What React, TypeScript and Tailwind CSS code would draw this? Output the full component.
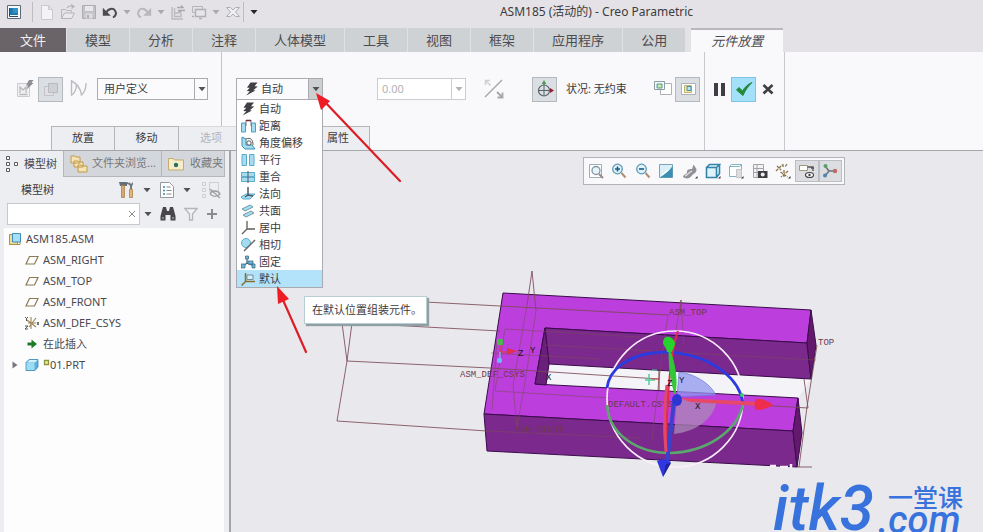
import React, { useState } from 'react'

type IconProps = { className?: string }

const Caret: React.FC<IconProps> = ({ className = 'text-neutral-600' }) => (
  <svg viewBox="0 0 8 6" className={`w-2 h-1.5 shrink-0 ${className}`}><path d="M.5 1h7L4 5.2z" fill="currentColor" /></svg>
)

const Bolt = () => (
  <svg viewBox="0 0 14 14" className="w-3.5 h-3.5 shrink-0">
    <path d="M5.500.5h7L9.500 4.300l3.200.1L8.300 8.300l2.200.2L1.200 13.600l3.600-4.300-3-.2L4.800 5.700H2z" fill="#3f3f44" />
  </svg>
)

// ---- quick access bar ----

const quick: { id: string; dim?: boolean; caret?: boolean; art: React.ReactNode }[] = [
  { id: '新建', art: <path d="M2.500 1.500h7l4 4v10h-11zM9.500 1.500v4h4" fill="#f3f2f4" stroke="#cbcace" /> },
  { id: '打开', art: <><path d="M1.500 14.500V5.500h4l1 1h5v2" fill="none" stroke="#b9b8bc" /><path d="M1.500 14.500l3-5.500h10l-3 5.500z" fill="#e9e8ea" stroke="#b5b4b8" /><path d="M7 4c1-2 3-2.500 6-1.500M11 .5l3 2-2.500 2" fill="none" stroke="#b5b4b8" strokeWidth="1.200" /></> },
  { id: '保存', art: <><path d="M1.500 1.500h13v13h-13z" fill="#c3c2c6" stroke="#aeadb1" /><path d="M4 2h8v5H4z" fill="#e8e7ea" /><path d="M4.500 9.500h7v5h-7z" fill="#dddce0" /><path d="M6 11h2v3H6z" fill="#aeadb1" /></> },
  { id: '撤消', caret: true, art: <><path d="M4 9C6 4.500 11 3.500 13 6.500s.5 5.500-2 7" fill="none" stroke="#4c4b50" strokeWidth="2" /><path d="M.8 3.800v8h8z" fill="#4c4b50" /></> },
  { id: '重做', caret: true, art: <><path d="M12 9C10 4.500 5 3.500 3 6.500s-.5 5.500 2 7" fill="none" stroke="#b9b8bc" strokeWidth="2" /><path d="M15.200 3.800v8h-8z" fill="#b9b8bc" /></> },
  { id: '重新生成', art: <><path d="M2 3v12h11M4.500 4v8.500H11V9M5 9h4V6" fill="none" stroke="#bab9bd" strokeWidth="1.400" /><path d="M7 3.500h6l-2-2M15 6.500H9l2 2" fill="none" stroke="#a9a8ac" strokeWidth="1.400" /></> },
  { id: '窗口', caret: true, art: <><path d="M1.500 2.500h10v6h-10z" fill="none" stroke="#b5b4b8" /><path d="M4.500 5.500h10v7h-10z" fill="#e6e5e8" stroke="#b0afb3" strokeWidth="1.400" /><path d="M1 12.500h2M8 14.500h3" stroke="#b0afb3" strokeWidth="1.400" /></> },
  { id: '关闭', art: <path d="M1.500 3.500h4L8 6l2.500-2.500h4L10.500 8l4 4.500h-4L8 10l-2.500 2.500h-4L5.500 8z" fill="#efeef0" stroke="#aeadb1" /> },
]

const TitleBar = () => (
  <header className="flex items-center h-7 bg-[#e4e2e6] pl-1.5 pb-1">
    <svg viewBox="0 0 16 16" className="w-4 h-4 shrink-0">
      <path d="M1.500 1.500h13v13h-13z" fill="#f7fafc" stroke="#5d6b77" />
      <path d="M4 4h8v7H4z" fill="#1f7bae" /><path d="M3.500 4v8.500H12" fill="none" stroke="#35495b" /><path d="M7 4h5v5H7z" fill="#2f93c4" />
    </svg>
    <span className="w-px h-5 bg-[#bdbcc0] ml-2.5 mr-1.5" />
    <div className="flex items-center gap-[5px]">
      {quick.map(q => (
        <React.Fragment key={q.id}>
          <button aria-label={q.id} className="w-4 h-4"><svg viewBox="0 0 16 16" className="w-4 h-4">{q.art}</svg></button>
          {q.caret && <Caret className="text-[#a9a8ac]" />}
        </React.Fragment>
      ))}
    </div>
    <span className="w-px h-5 bg-[#bdbcc0] ml-0.5 mr-1.5" />
    <button aria-label="自定义"><Caret className="text-neutral-800" /></button>
    <h1 className="flex-1 text-center text-[12px] text-[#3c3b40] pr-12 whitespace-nowrap">ASM185 (活动的) - Creo Parametric</h1>
  </header>
)

const tabs = ['模型', '分析', '注释', '人体模型', '工具', '视图', '框架', '应用程序', '公用']

const TabBar = () => (
  <nav className="flex h-6 bg-[#e4e2e6] text-[13px] leading-[22px] text-[#4c4b50] whitespace-nowrap">
    <button className="w-[66px] bg-[#6a6468] text-[#f1f0f2]">文件</button>
    {tabs.map(t => <button key={t} className="px-[18px] bg-[#cfd2d5] border-l border-[#e0e1e4]">{t}</button>)}
    <button className="ml-1.5 px-5 italic bg-[#f9f8fb] border-t-2 border-[#b9b8bc]">元件放置</button>
  </nav>
)

// ---- constraint list ----

const constraints: { name: string; art: React.ReactNode }[] = [
  { name: '自动', art: <path d="M6 .5h7L10 4.300l3.200.1L8.800 8.300l2.200.2L1.700 13.600l3.600-4.300-3-.2L5.300 5.700H2.500z" fill="#3f3f44" /> },
  { name: '距离', art: <><path d="M.5 4h4v9h-4zM10.500 4h4v9h-4z" fill="#a5dcf0" stroke="#4b9fc0" /><path d="M5 1v6M10 1v6" stroke="#777" /><path d="M5 1.500h5" stroke="#703040" strokeWidth="1.500" /></> },
  { name: '角度偏移', art: <><path d="M1 1v9l3 3h10l-3-4H5V3z" fill="#a5dcf0" stroke="#3f8fb3" /><path d="M5 3c5-2 7 1 7 6" fill="none" stroke="#555" /><circle cx="8" cy="7" r="2.200" fill="#fff" stroke="#555" /></> },
  { name: '平行', art: <path d="M1 1.500h4.500v11H1zM8.500 1.500H13v11H8.500z" fill="#a5dcf0" stroke="#5aaccb" /> },
  { name: '重合', art: <><path d="M.5 2.500h13v9H.5z" fill="#a5dcf0" stroke="#5aaccb" /><path d="M7 1v12" stroke="#555" /><path d="M1 7h12" stroke="#2c7fa5" /></> },
  { name: '法向', art: <><path d="M0 10l5-3h9l-5 5H2z" fill="#a5dcf0" stroke="#5aaccb" /><path d="M7 0v9M4 10l3-2 5 1" fill="none" stroke="#4b5966" strokeWidth="1.500" /></> },
  { name: '共面', art: <><path d="M1 5l8-4 3 2-8 4z" fill="#a5dcf0" stroke="#6d98aa" /><path d="M2 11l8-4 3 2-8 4z" fill="#a5dcf0" stroke="#6d98aa" /></> },
  { name: '居中', art: <path d="M6 0v8h8M6 8l-5 5" fill="none" stroke="#5f5e55" strokeWidth="1.300" /> },
  { name: '相切', art: <><circle cx="5" cy="5" r="4.500" fill="#a5dcf0" stroke="#5aaccb" /><path d="M14 2 3 13" stroke="#666" strokeWidth="1.500" /></> },
  { name: '固定', art: <><path d="M6 1v7l7 3M6 8l-5 4" fill="none" stroke="#3d6f8c" strokeWidth="1.300" /><path d="M4.500 1h3v3h-3zM7 6h5v3H7zM0 9h4v4H0zM11 9h3v4h-3z" fill="#6db7d4" stroke="#35627c" strokeWidth=".7" /></> },
  { name: '默认', art: <><path d="M6 3h6v4.500H6z" fill="#d9eef7" stroke="#6f8f9c" /><path d="M4.500 1v8.500H14M4.500 9.500.5 13.500" fill="none" stroke="#8a6d2a" strokeWidth="1.500" /></> },
]

const ConstraintPicker: React.FC = () => {
  const [active, setActive] = useState('默认')
  return (
    <div className="relative w-[87px] text-[11px]">
      <button aria-haspopup="listbox" aria-expanded="true" className="flex items-center w-full h-[22px] border border-[#a9abaf] bg-[#fbfafc]">
        <span className="flex-1 flex items-center gap-0.5 pl-2"><Bolt />自动</span>
        <span className="w-3.5 h-full flex items-center justify-center bg-[#cdd0d3] border-l border-[#a9abaf]"><Caret /></span>
      </button>
      <div className="absolute z-20 left-0 top-full w-full">
        <ul role="listbox" aria-label="约束类型" className="bg-white border border-t-0 border-[#a9abaf]">
          {constraints.map(c => (
            <li key={c.name} role="option" aria-selected={c.name === active} onMouseEnter={() => setActive(c.name)}
              className={`flex items-center gap-[3px] h-[17px] pl-1 leading-[17px] whitespace-nowrap ${c.name === active ? 'bg-[#b3e3fb]' : ''}`}>
              <svg viewBox="0 0 15 14" className="w-[15px] h-3.5 shrink-0">{c.art}</svg>{c.name}
            </li>
          ))}
        </ul>
        <div role="tooltip" className="absolute left-[68px] top-full mt-2 h-7 pl-[7px] pr-1 leading-[26px] text-[11px] whitespace-nowrap bg-white border border-[#b9cdd2] shadow-[2px_2px_1px_#8e9fa5]">
          在默认位置组装元件。
        </div>
      </div>
    </div>
  )
}

const pressed = 'w-[25px] h-[25px] shrink-0 flex items-center justify-center bg-[#dbdfe3] border border-[#b4b9be]'

const Ribbon = () => (
  <section className="flex h-[99px] bg-[#f9f8fb] border-b border-[#a6a7ab] text-[11px] text-[#3c3b40] whitespace-nowrap">
    <div className="flex flex-col">
      <div className="flex h-[74px]">
        <div className="flex items-center gap-1 pl-3.5 pr-[13px] border-r border-[#c3c2c7]">
          <button aria-label="手动" className="w-5 h-5">
            <svg viewBox="0 0 20 20" className="w-5 h-5"><path d="M3.500 4.500h12v13h-12z" fill="#f1f0f3" stroke="#cccbcf" /><path d="M6 14V8l3 3 3-3v6M5.500 15.500h8" fill="none" stroke="#bab9bd" strokeWidth="1.300" /><path d="M15 1h4.500l-2 3h2l-7 6.500 1.500-4h-2z" fill="#8f8e92" /></svg>
          </button>
          <button aria-label="界面" className={pressed}>
            <svg viewBox="0 0 18 18" className="w-4.5 h-4.5"><path d="M2.500 6.500h9v9h-9z" fill="#e0e1e4" stroke="#c1c3c7" /><path d="M6.500 3.500h9v9h-9z" fill="#cfd0d4" stroke="#b8babe" /></svg>
          </button>
          <button aria-label="转换" className="w-[22px] h-5">
            <svg viewBox="0 0 22 20" className="w-[22px] h-5"><path d="M4.500 1v15c3-1 5-6 5-11M4.500 2c6 3 9 7 10 14C18 13 19 9 19 4" fill="none" stroke="#bdbcc1" strokeWidth="1.400" /></svg>
          </button>
          <div className="relative ml-1">
            <select aria-label="约束集" className="appearance-none w-[111px] h-[22px] pl-1.5 bg-[#fbfafc] border border-[#a9abaf]"><option>用户定义</option></select>
            <span className="absolute right-0 top-0 h-full w-3.5 flex items-center justify-center border-l border-[#a9abaf] pointer-events-none"><Caret /></span>
          </div>
        </div>
        <div className="flex items-center pl-3.5 pr-1">
          <ConstraintPicker />
          <div className="flex ml-[54px] h-[22px] border border-[#cccbd0] bg-white">
            <input aria-label="偏移" disabled defaultValue="0.00" className="w-[73px] px-1 text-[#b3b2b7]" />
            <button aria-label="偏移列表" className="w-3.5 flex items-center justify-center border-l border-[#cccbd0]"><Caret className="text-[#b3b2b7]" /></button>
          </div>
          <button aria-label="反向" className="ml-4.5 w-5 h-5">
            <svg viewBox="0 0 20 20" className="w-5 h-5"><path d="M1 18 18 1" stroke="#a7a6aa" strokeWidth="1.400" /><path d="M1.500 6V1.500H6M1.500 1.500l5 5" fill="none" stroke="#d0cfd3" strokeWidth="1.500" /><path d="M18.500 13.500v5h-5M13 13l5 5" fill="none" stroke="#a7a6aa" strokeWidth="1.800" /></svg>
          </button>
          <button aria-label="3D 拖动器" className={`${pressed} ml-7`}>
            <svg viewBox="0 0 20 20" className="w-5 h-5"><circle cx="9" cy="11.500" r="5.500" fill="none" stroke="#55636c" strokeWidth="1.200" /><path d="M9 3v14M3 11.500h13" stroke="#55636c" /><path d="M6.800 5 9 1l2.200 4z" fill="#4c9a4c" /><path d="m15 9 4 2.500-4 2.500z" fill="#8c2434" /></svg>
          </button>
          <span className="ml-[9px] w-[62px]">状况: 无约束</span>
          <button aria-label="独立窗口" className="ml-6.5 w-[18px] h-[18px]">
            <svg viewBox="0 0 18 18" className="w-[18px] h-[18px]"><path d="M6.500 3.500h11v11h-11z" fill="#fff" stroke="#aeb0b4" /><path d="M.5 1.500h10v8H.5z" fill="#f5faf8" stroke="#8d9da0" /><path d="M3 4h5v4H3z" fill="#cfe8a8" stroke="#4a9c9c" /></svg>
          </button>
          <button aria-label="组件窗口" className={`${pressed} ml-[3px]`}>
            <svg viewBox="0 0 18 18" className="w-[18px] h-[18px]"><path d="M2.500 3.500h14v11h-14z" fill="#fff" stroke="#aeb0b4" /><path d="M5.500 5.500h7v7h-7z" fill="#f6e6a8" stroke="#c4b46a" /><path d="M8 6.500h4v4H8z" fill="#bfe4ee" stroke="#3d93ab" /></svg>
          </button>
        </div>
      </div>
      <div className="flex h-6 ml-[51px] self-start">
        <button className="w-16 bg-[#eceef2] border border-b-0 border-[#b4b6ba]">放置</button>
        <button className="w-16 bg-[#eceef2] border border-b-0 border-l-0 border-[#b4b6ba]">移动</button>
        <button disabled className="w-16 bg-[#eceef2] border-t border-[#d9dade] text-[#b5b4b9]">选项</button>
        <span className="w-16 bg-[#eceef2] border-t border-[#d9dade]" />
        <button className="w-[63px] bg-[#eceef2] border border-b-0 border-l-0 border-[#b4b6ba]">属性</button>
      </div>
    </div>
    <div className="flex gap-1.5 px-2 pb-6 w-[81px] items-center border-x border-[#c9c8cd]">
      <button aria-label="暂停" className="w-3 h-4 flex gap-[3px] justify-center"><i className="w-1 h-[13px] mt-0.5 bg-[#3f3e43]" /><i className="w-1 h-[13px] mt-0.5 bg-[#3f3e43]" /></button>
      <button aria-label="确定" className="w-[25px] h-[25px] bg-[#a3e0fb] border border-[#7fc4e4] flex items-center justify-center">
        <svg viewBox="0 0 20 20" className="w-5 h-5"><path d="M2.500 11 5 8.500 8.500 12C11 8 14 5 18 3.500 14 7.500 11 11.500 9 16.500z" fill="#238a3c" stroke="#238a3c" strokeWidth="1" /></svg>
      </button>
      <button aria-label="取消" className="w-3 h-3"><svg viewBox="0 0 12 12" className="w-3 h-3"><path d="m1.500 2 9 8.500M10.500 2l-9 8.500" stroke="#3f3e43" strokeWidth="2.600" /></svg></button>
    </div>
  </section>
)

// ---- model tree ----

const Plane = () => <svg viewBox="0 0 14 14" className="w-3.5 h-3.5"><path d="M4.500 3.500h8.500l-3.500 7.500H1z" fill="none" stroke="#8c7b52" strokeWidth="1.200" /></svg>

const tree: { name: string; art: React.ReactNode; open?: boolean }[] = [
  { name: 'ASM_RIGHT', art: <Plane /> },
  { name: 'ASM_TOP', art: <Plane /> },
  { name: 'ASM_FRONT', art: <Plane /> },
  { name: 'ASM_DEF_CSYS', art: <svg viewBox="0 0 14 14" className="w-3.5 h-3.5"><path d="M6 1v12M2 4l9 7M11 2 4 11M3 7h8" stroke="#9a8450" strokeWidth="1.100" /><path d="m0 1 1.500 1.500L3 1M1.500 2.500V5M0 10h3l-3 3h3M12 6l2 3M14 6l-2 3" fill="none" stroke="#444" strokeWidth=".9" /></svg> },
  { name: '在此插入', art: <svg viewBox="0 0 14 14" className="w-3.5 h-3.5"><path d="M2.500 5.500h4V2.500L12 7l-5.500 4.500v-3h-4z" fill="#1d7a2c" /></svg> },
  { name: '01.PRT', open: true, art: <svg viewBox="0 0 14 14" className="w-3.5 h-3.5"><path d="M1 4.500 4 1.500h9v7.500l-3 3.500H1z" fill="#58b2dc" stroke="#3a8cb4" strokeWidth=".8" /><path d="M1.500 5h8v7h-8z" fill="#9fdbf5" /><path d="M2 4.500 4.500 2H12.500L10 4.500z" fill="#d3f1fc" /></svg> },
]

const ModelTree = () => (
  <aside className="w-[231px] shrink-0 bg-[#eceef2] border-r-2 border-[#a3a5aa] text-[11px] text-[#4a494e] flex flex-col whitespace-nowrap">
    <div className="flex h-[26px] mr-1">
      <button className="w-[63px] flex items-center gap-1.5 pl-1.5">
        <svg viewBox="0 0 12 18" className="w-3 h-4.5"><path d="M.5 1.500h3v3h-3zM.5 7.500h3v3h-3zM.5 13.500h3v3h-3zM8.500 7.500h3v3h-3z" fill="#fff" stroke="#5b5a5f" /></svg>模型树
      </button>
      <button className="flex-1 flex items-center gap-1 pl-1.5 bg-[#d3d6da] border-l border-b border-[#b4b6ba] text-[#77767b]">
        <svg viewBox="0 0 18 18" className="w-4.5 h-4.5 shrink-0"><path d="M1 1h4l1 1h4v6H1zM4 6h4l1 1h4v5H4zM8 10h3l1 1h5v6H8z" fill="#f3e3b5" stroke="#c19a4c" /></svg>文件夹浏览...
      </button>
      <button className="w-16 flex items-center gap-1.5 pl-1.5 bg-[#d3d6da] border-l border-b border-r border-[#b4b6ba] text-[#77767b]">
        <svg viewBox="0 0 16 16" className="w-4 h-4"><path d="M.5 2.500h5l1 1.500h9v10H.5z" fill="#f6ecca" stroke="#c5ab6c" /><circle cx="8" cy="9" r="2.200" fill="#23715f" /></svg>收藏夹
      </button>
    </div>
    <div className="flex items-center h-[26px] pl-[21px] pr-2">
      <span className="flex-1 text-[#3c3b40]">模型树</span>
      <button aria-label="设置" className="flex items-center gap-2">
        <svg viewBox="0 0 18 18" className="w-4.5 h-4.5"><path d="M2 1h7c2 0 3 1 4 3l-3-1v2H3z" fill="#66707a" /><path d="M4.500 4.500h3v12h-3z" fill="#d8a870" stroke="#a98352" strokeWidth=".8" /><path d="M12 1c0 2 0 3 1 4v3h2V5c1-1 1-2 1-4l-2 2z" fill="#6d7780" /><path d="M12.500 8.500h3v8h-3z" fill="#e3b77a" stroke="#a98352" strokeWidth=".8" /></svg><Caret />
      </button>
      <button aria-label="显示" className="flex items-center gap-2 ml-2">
        <svg viewBox="0 0 16 18" className="w-4 h-4.5"><path d="M1.500 1.500h9l4 4v11h-13z" fill="#fff" stroke="#97999e" /><path d="M4 6h2M4 9.500h2M4 13h2" stroke="#3b86ad" strokeWidth="1.600" /><path d="M7.500 6h4M7.500 9.500h5M7.500 13h5" stroke="#888" /></svg><Caret />
      </button>
      <button aria-label="隐藏" className="ml-2.5">
        <svg viewBox="0 0 20 18" className="w-5 h-4.5"><path d="M1.500 1.500h3v3h-3zM1.500 7.500h3v3h-3zM1.500 13.500h3v3h-3zM8.500 1.500h9v9h-9z" fill="none" stroke="#cfced3" /><path d="M9 13c2-4 8-4 10 0-3 3-7 3-10 0M9 8l10 9" fill="none" stroke="#9f9ea3" strokeWidth="1.300" /></svg>
      </button>
    </div>
    <div className="flex items-center h-[22px] pl-[7px]">
      <div className="relative">
        <input aria-label="搜索模型树" className="w-[133px] h-[22px] px-1 bg-white border border-[#c6c8cc]" />
        <button aria-label="清除" className="absolute right-1 top-[7px]"><svg viewBox="0 0 8 8" className="w-2 h-2"><path d="m1 1 6 6M7 1 1 7" stroke="#8c8b90" /></svg></button>
      </div>
      <button aria-label="搜索选项" className="ml-1"><Caret /></button>
      <button aria-label="查找" className="ml-2">
        <svg viewBox="0 0 16 16" className="w-4 h-4"><path d="M3 1h3l1 4h2l1-4h3l2.500 9v4.500h-5V9h-5v5.500h-5V10z" fill="#47464b" /><path d="M2 12h2M12 12h2" stroke="#98979c" strokeWidth="1.500" /></svg>
      </button>
      <button aria-label="过滤器" className="ml-2"><svg viewBox="0 0 14 14" className="w-3.5 h-3.5"><path d="M.8 1.500h12.400L8.500 7v6h-3V7z" fill="#f3f3f6" stroke="#b5b4b9" strokeWidth="1.300" /></svg></button>
      <button aria-label="添加" className="ml-2"><svg viewBox="0 0 12 12" className="w-3 h-3"><path d="M6 1v10M1 6h10" stroke="#8a8a8f" strokeWidth="2" /></svg></button>
    </div>
    <ul className="flex-1 mt-[3px] ml-1 mr-[5px] bg-[#fdfdfe] leading-[21px]">
      <li className="flex items-center gap-1 h-[21px] pl-1">
        <svg viewBox="0 0 14 14" className="w-3.5 h-3.5"><path d="M1.500 2.500h8v10h-8z" fill="#f1dc9c" stroke="#a8924e" /><path d="M4.500 1.500h8v8.500h-8z" fill="#a5def5" stroke="#3c8fb8" /><path d="M1.500 12.500h10.500V10" fill="none" stroke="#a8924e" /></svg>ASM185.ASM
      </li>
      {tree.map(n => (
        <li key={n.name} className="relative flex items-center gap-1 h-[21px] pl-[21px]">
          {n.open && <svg viewBox="0 0 6 8" className="absolute left-2 w-1.5 h-2"><path d="M.5.5 5.500 4 .5 7.500z" fill="#77767b" /></svg>}
          {n.art}
          {n.open && <svg viewBox="0 0 7 8" className="w-[7px] h-2 -mt-1 -mr-1"><path d="M1.500 1.500h4v4h-4z" fill="#eef29a" stroke="#8c9440" strokeWidth="1.300" /></svg>}
          <span>{n.name}</span>
        </li>
      ))}
    </ul>
  </aside>
)

// ---- graphics window ----

const view: { id: string; on?: boolean; art: React.ReactNode }[] = [
  { id: '重新调整', art: <><path d="M1.500 1.500h12v13h-12z" fill="#fff" stroke="#a4acb4" /><circle cx="8" cy="7.500" r="4" fill="#e7f4fa" stroke="#7f97a7" strokeWidth="1.300" /><path d="m11 11 4 4" stroke="#9a8a80" strokeWidth="2" /></> },
  { id: '放大', art: <><circle cx="6.500" cy="6" r="4.800" fill="#dff1f9" stroke="#5a9ab8" strokeWidth="1.300" /><path d="M4 6h5M6.500 3.500v5" stroke="#1c5c80" strokeWidth="1.600" /><path d="m10.500 10 4 4.500" stroke="#b08e72" strokeWidth="2" /></> },
  { id: '缩小', art: <><circle cx="6.500" cy="6" r="4.800" fill="#dff1f9" stroke="#5a9ab8" strokeWidth="1.300" /><path d="M4 6h5" stroke="#1c5c80" strokeWidth="1.600" /><path d="m10.500 10 4 4.500" stroke="#b08e72" strokeWidth="2" /></> },
  { id: '重画', art: <><path d="M1.500 1.500h13v13h-13z" fill="#d9f0f8" stroke="#7aa4b6" /><path d="M2 14.500C5 12 11 9 14.500 3v11.500z" fill="#3a8fb3" /><path d="m4 12 6-5" stroke="#fff" strokeWidth="1.500" /></> },
  { id: '渲染', art: <><path d="M1 14c0-3 4-2 4-5s3-3 5-3l1.500-4.500 3 4.500c0 5-3 4-5 7s-6 3-8.500 1z" fill="#909095" /><path d="M3 13c3-1 4-4 7-5" fill="none" stroke="#d9d9dc" strokeWidth="1.500" /><path d="M15.500 13v2.500H13z" fill="#333" /></> },
  { id: '显示样式', art: <><path d="M1.500 4.500h10v10h-10zM1.500 4.500l3-3h10l-3 3M14.500 1.500v9l-3 4" fill="#dff3fb" stroke="#3285a9" strokeWidth="1.600" /><path d="M15.500 13v2.500H13z" fill="#333" /></> },
  { id: '已保存方向', art: <><path d="M1.500 3.500l2-2h10v10l-2 2h-10z" fill="#fdfefe" stroke="#85b3c4" /><path d="M1.500 3.500h10l2-2" fill="none" stroke="#85b3c4" /><path d="M8.500 6.500h5v8h-5z" fill="#ddd" stroke="#c4c4c6" /><path d="M15.500 13v2.500H13z" fill="#333" /></> },
  { id: '视图管理器', art: <><path d="M1.500 1.500h10v13h-10zM1.500 5.500h10M1.500 9.500h10M5 1.500v13" fill="#f3f3f5" stroke="#a4a4a8" /><path d="M6 8h9.500v7H6z" fill="#3d3c41" /><circle cx="10.700" cy="11.500" r="2" fill="#eee" /></> },
  { id: '基准显示', art: <><path d="m1 8 6-6M2 3l4 4M9 7v8M5.500 9l7 5M13 8l-7 6M8 1v3M12 1l-2 3" stroke="#8a7446" strokeWidth="1.300" strokeDasharray="3 1" /><path d="M15.500 13v2.500H13z" fill="#333" /></> },
  { id: '注释显示', on: true, art: <><path d="M.5 2.500h8v5h-8z" fill="#fff" stroke="#a09a78" /><path d="M8.500 4H14v4M12 5h3" fill="none" stroke="#555" strokeWidth="1.300" /><ellipse cx="10.500" cy="12" rx="4" ry="2.500" fill="#fff" stroke="#444" strokeWidth="1.200" /><circle cx="10.500" cy="12" r="1.200" fill="#444" /></> },
  { id: '旋转中心', on: true, art: <><path d="M3 3l4 5M7 8l-4 5M7 8h7" stroke="#6c747c" strokeWidth="1.600" /><circle cx="3.500" cy="3" r="2" fill="#5aa06a" /><circle cx="3" cy="12.500" r="2" fill="#4d86b0" /><circle cx="13" cy="8" r="2.200" fill="#c06a62" /></> },
]

const ViewBar = () => (
  <div className="relative z-10 ml-[352px] mt-1.5 w-[262px] h-7 pr-0.5 grid grid-cols-11 items-center bg-[#f9f8fb] border border-[#b4b3b8]">
    {view.map(v => (
      <button key={v.id} aria-label={v.id} className={`h-[22px] flex items-center justify-center ${v.on ? 'bg-[#dbdde1] border border-[#bcbec3]' : ''}`}>
        <svg viewBox="0 0 16 16" className="w-4 h-4">{v.art}</svg>
      </button>
    ))}
  </div>
)

const Scene = () => (
  <svg viewBox="231 151 752 381" className="absolute left-0 top-0 w-[752px] h-[381px]" aria-label="模型">
    <path d="M549 364 811 379 798 398 535 384z" fill="#f4f3f7" />
    <g stroke="#3a0c4a" strokeWidth="1" strokeLinejoin="round">
      <path d="M503 293 811 310 807 343 545 328 535 384 798 398 793 431 484 414z" fill="#bb3edd" />
      <path d="M545 328 807 343 811 379 549 364z" fill="#7c298e" />
      <path d="M545 328 549 364 546 385 535 384z" fill="#6a1f7c" />
      <path d="M811 310 816 345 811 379 807 343z" fill="#64196f" />
      <path d="M484 414 793 431 797 467 487 451z" fill="#7c298e" />
      <path d="M798 398 802 433 797 467 793 431z" fill="#64196f" />
    </g>
    {/* datum planes */}
    <g fill="none" stroke="#7d4a56" strokeWidth="1" strokeOpacity=".85">
      <path d="M350 298 500 306 668 315M342 323 352 323 500 331M342 323 347 361 352 323M347 361 337 421 487 431M347 361 490 368 659 379" />
      <path d="M532 271 527 305M532 271 536 311M681 300 680 312M817 345 807 407 799 467M804 379 808 408 740 404M797 467h15" />
      <g strokeOpacity=".55">
        <path d="M527 305 513 385 517 428M536 311 527 370 517 428M505 329 495 391 610 398M505 329 640 337M491 353 600 359M487 431 640 438" />
        <path d="M681 300 676 330M681 300 684 345M668 315 659 379 652 440M545 345 816 360M497 340 492 410" />
      </g>
    </g>
    <g fontFamily="'Liberation Mono', monospace" fontSize="9" fill="#6b3a4c">
      <text x="669" y="315">ASM_TOP</text>
      <text x="818" y="345">TOP</text>
      <text x="460" y="377">ASM_DEF_CSYS</text>
      <text x="608" y="407">DEFAULT.CSYS</text>
      <text x="515" y="432">ASM_RIGHT</text>
      <g fill="#1c1020"><text x="518" y="356">Z</text><text x="530" y="353">Y</text><text x="546" y="380">X</text></g>
    </g>
    {/* assembly csys */}
    <path d="M500 342v10h14" fill="none" stroke="#d8425a" strokeWidth="1.500" /><path d="M500 352v9" stroke="#8aa5e8" strokeWidth="1.500" />
    <path d="m507 348 10 3-10 4z" fill="#e0304a" />
    <rect x="497" y="339" width="6" height="6" rx="1" fill="#4bb84e" /><rect x="497" y="358" width="5" height="5" rx="2" fill="#6fbcf5" />
    {/* component csys */}
    <path d="M659 371v19" stroke="#6b3434" /><path d="M649 374v11M645 380h10" stroke="#4fcf9b" strokeWidth="1.500" /><path d="M652 379h8" stroke="#d94b4b" />
    {/* 3D dragger */}
    <path d="M677 397 679 372C694 374 709 382 716 395z" fill="#8f97ee" fillOpacity=".75" stroke="#6f78d8" strokeWidth=".7" />
    <path d="M677 399 717 400C714 418 698 431 674 434z" fill="#a98bb5" fillOpacity=".75" />
    <circle cx="675" cy="399" r="68" fill="none" stroke="#fbeffc" strokeWidth="1.600" />
    <path d="M607 388C612 348 685 340 724 372 735 381 741 390 743 403" fill="none" stroke="#2a3be0" strokeWidth="2.800" />
    <path d="M607 405C609 435 638 453 670 453 706 452 737 432 743 404" fill="none" stroke="#5aa86c" strokeWidth="2.600" />
    <path d="M674 402 667 462" stroke="#3a42cc" strokeWidth="4" />
    <path d="M678 331C671 350 667 390 666 452" fill="none" stroke="#e22a45" strokeWidth="2" />
    <path d="M667 385C664 405 664 430 666 452" fill="none" stroke="#e2486c" strokeWidth="3" />
    <path d="M669 350C669 368 671 382 675 394 678 378 674 362 670 350z" fill="#30c836" stroke="#30c836" />
    <path d="M666 337c4-1 8 2 9 6 0 4-2 5-3 9h-5c0-4-3-5-4-9 0-3 1-5 3-6z" fill="#26d32c" />
    <path d="M680 398 760 402v4L690 402z" fill="#e84868" /><path d="M756 399c8 0 12 2 17 6-5 3-10 5-17 5-2-3-2-8 0-11z" fill="#ee2e4c" />
    <path d="M657 461c5-3 10-2 14 1l-8 15z" fill="#2f37e2" /><path d="m666 464 5-1-8 14z" fill="#1f239a" />
    <ellipse cx="677" cy="400" rx="5" ry="6" fill="#2d35d2" />
    <circle cx="742" cy="395" r="2" fill="#35cf72" /><path d="M652 370h5" stroke="#54d898" />
    <g fontFamily="'Liberation Mono', monospace" fontSize="9" fill="#15101c"><text x="679" y="383">Y</text><text x="695" y="409">X</text><text x="667" y="386">Z</text></g>
    <path d="M770 466h6M780 467h8M791 464v4" stroke="#f8eefa" strokeWidth="2.500" />
  </svg>
)

const Brand = () => (
  <div className="absolute right-[20px] bottom-0 flex items-end gap-1 text-[#3873dd] italic font-[Roboto,'Noto_Sans_CJK_SC',sans-serif] whitespace-nowrap">
    <span className="text-[62px] leading-[46px] font-medium">itk3</span>
    <span className="flex flex-col h-[46px]">
      <span className="pl-2.5 text-[25px] leading-[26px] not-italic font-medium">一堂课</span>
      <span className="text-[38px] leading-[16px] font-medium">.com</span>
    </span>
  </div>
)

export default function App() {
  return (
    <div className="relative min-h-screen flex flex-col overflow-hidden bg-[#e9e8ed] font-['Noto_Sans','Noto_Sans_CJK_SC',sans-serif]">
      <TitleBar />
      <TabBar />
      <Ribbon />
      <main className="flex flex-1">
        <ModelTree />
        <div className="relative flex-1 overflow-hidden">
          <Scene />
          <ViewBar />
          <Brand />
        </div>
      </main>
      {/* pointer arrows over the menu */}
      <svg viewBox="0 0 983 532" className="absolute z-30 left-0 top-0 w-[983px] h-[532px] pointer-events-none">
        <path d="M400 181 324 101M306 352 283 300" stroke="#dc1f26" strokeWidth="2.200" strokeLinecap="round" />
        <path d="m316 93 14 8-9 9zM277 286l12 13-11 5z" fill="#ee1c24" />
      </svg>
    </div>
  )
}
